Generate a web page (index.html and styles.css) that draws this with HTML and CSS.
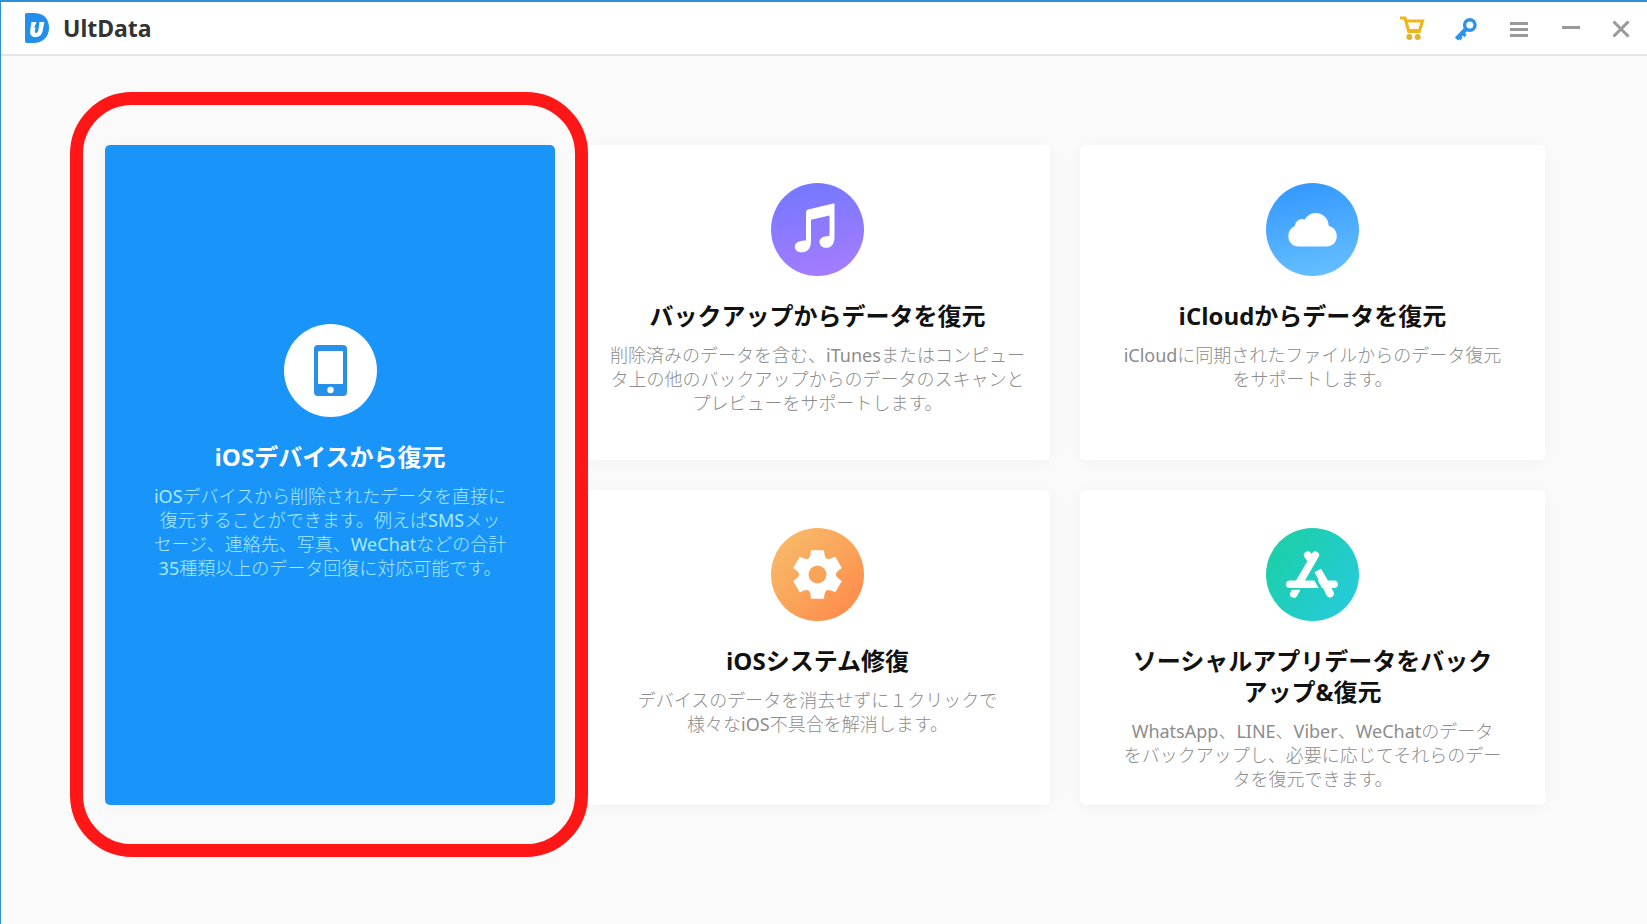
FILE: index.html
```html
<!DOCTYPE html>
<html lang="ja">
<head>
<meta charset="utf-8">
<meta name="viewport" content="width=device-width, initial-scale=1">
<title>UltData</title>
<link rel="stylesheet" href="styles.css">
</head>
<body>
<div class="window">
  <header class="titlebar">
    <svg class="logo" viewBox="0 0 24 30" aria-hidden="true">
      <path fill="#2290ea" d="M0 1.5Q0 0 1.500 0H8C19 0 24 6 24 14.500C24 24 18 30 8 30H2Q0 30 0 28Z"/>
      <path fill="#fff" d="M6.500 9H11.500L10 18.500Q10 20.500 11.600 20Q13 19.500 13.500 16L14.500 9H19.300L17.600 18Q16.200 24.200 10.300 24.200Q4.300 24 5.200 17.500Z"/>
      <path fill="#2290ea" d="M12.300 8L9 14.500H11L10.200 18L14 12.500H12Z"/>
    </svg>
    <h1 class="brand">UltData</h1>
    <nav class="actions" aria-label="ウィンドウ">
      <button class="action" type="button" aria-label="購入">
        <svg viewBox="0 0 32 32" fill="none" stroke="#efb71c" stroke-width="3.200">
          <path d="M3 6H8L11.500 18.500H22.500L25.500 9H9"/>
          <path d="M10.500 20H23.500" stroke-width="2"/>
          <g fill="#e3b22c" stroke="none"><circle cx="12.300" cy="25" r="3"/><circle cx="20.700" cy="25" r="3"/></g>
        </svg>
      </button>
      <button class="action" type="button" aria-label="登録">
        <svg viewBox="0 0 32 32" fill="none" stroke="#2b93ec">
          <circle cx="20.800" cy="13" r="5.200" stroke-width="3.400"/>
          <path d="M17 17L7.500 27" stroke-width="4.400"/>
          <path d="M13 20.500L16.500 24M9.500 24L12.500 27" stroke-width="3.200"/>
        </svg>
      </button>
      <button class="action" type="button" aria-label="メニュー">
        <svg viewBox="0 0 32 32" fill="none" stroke="#999" stroke-width="3"><path d="M9 11.500H27M9 17.500H27M9 23.500H27"/></svg>
      </button>
      <button class="action" type="button" aria-label="最小化">
        <svg viewBox="0 0 32 32" fill="none" stroke="#999" stroke-width="3"><path d="M9 15.500H27"/></svg>
      </button>
      <button class="action" type="button" aria-label="閉じる">
        <svg viewBox="0 0 32 32" fill="none" stroke="#999" stroke-width="3"><path d="M8.500 9.500L23.500 24.500M23.500 9.500L8.500 24.500"/></svg>
      </button>
    </nav>
  </header>

  <main class="modes">
    <a class="card card-primary" href="#device">
      <svg class="icon" viewBox="0 0 93 93" aria-hidden="true">
        <circle cx="46.500" cy="46.500" r="46.500" fill="#fff"/>
        <rect x="30" y="21" width="33" height="51" rx="4" fill="#2790ea"/>
        <rect x="34" y="27" width="25" height="33" rx="1" fill="#fff"/>
        <circle cx="46.500" cy="66" r="3.200" fill="#fff"/>
      </svg>
      <h2 class="card-title">iOSデバイスから復元</h2>
      <p class="card-text">iOSデバイスから削除されたデータを直接に<br>復元することができます。例えばSMSメッ<br>セージ、連絡先、写真、WeChatなどの合計<br>35種類以上のデータ回復に対応可能です。</p>
    </a>

    <a class="card" href="#backup">
      <svg class="icon" viewBox="0 0 93 93" aria-hidden="true">
        <defs><linearGradient id="violet" x1="0.400" y1="0" x2="0.600" y2="1"><stop offset="0" stop-color="#7478ff"/><stop offset="1" stop-color="#a67cff"/></linearGradient></defs>
        <circle cx="46.500" cy="46.500" r="46.500" fill="url(#violet)"/>
        <path fill="#fff" d="M35 29Q35 27 37 26.400L63.500 20.300V54C63.500 61.500 60 64.800 55.500 64.800C51.500 64.800 48.500 62.500 48.500 59C48.500 55 52.500 53 58.500 53V32.500L40 36.800V58C40 66 36 69.300 30.700 69.300C26.500 69.300 23.800 67 23.800 63.700C23.800 59.700 28 57.500 35 57.500Z"/>
      </svg>
      <h2 class="card-title">バックアップからデータを復元</h2>
      <p class="card-text">削除済みのデータを含む、iTunesまたはコンピュー<br>タ上の他のバックアップからのデータのスキャンと<br>プレビューをサポートします。</p>
    </a>

    <a class="card" href="#icloud">
      <svg class="icon" viewBox="0 0 93 93" aria-hidden="true">
        <defs><linearGradient id="sky" x1="0.400" y1="0" x2="0.600" y2="1"><stop offset="0" stop-color="#3498ff"/><stop offset="1" stop-color="#65bfff"/></linearGradient></defs>
        <circle cx="46.500" cy="46.500" r="46.500" fill="url(#sky)"/>
        <path fill="#fff" d="M32.500 63.500C26.500 63.500 22.300 59 22.300 53.500C22.300 48.500 25 44.500 28.800 43.300C29 38.500 34 34.500 39 36.500C41 32.500 45 30 49.800 30C57 30 62.500 35.500 62.800 43C67.500 44 70.800 48 70.800 53C70.800 59 66.500 63.500 60.500 63.500Z"/>
      </svg>
      <h2 class="card-title">iCloudからデータを復元</h2>
      <p class="card-text">iCloudに同期されたファイルからのデータ復元<br>をサポートします。</p>
    </a>

    <a class="card" href="#repair">
      <svg class="icon" viewBox="0 0 93 93" aria-hidden="true">
        <defs><linearGradient id="amber" x1="0.100" y1="0.100" x2="0.900" y2="0.900"><stop offset="0" stop-color="#f8b96a"/><stop offset="0.500" stop-color="#faa55a"/><stop offset="1" stop-color="#ff8a4b"/></linearGradient></defs>
        <circle cx="46.500" cy="46.500" r="46.500" fill="url(#amber)"/>
        <g transform="translate(46.500 46.500)" fill="#fff">
          <circle r="18"/>
          <path id="tooth" d="M-10 -15Q-7 -16 -6.500 -24.300H6.500Q7 -16 10 -15L10 15Q7 16 6.500 24.300H-6.500Q-7 16 -10 15Z"/>
          <use href="#tooth" transform="rotate(60)"/>
          <use href="#tooth" transform="rotate(120)"/>
          <circle r="9" fill="#faa45a"/>
        </g>
      </svg>
      <h2 class="card-title">iOSシステム修復</h2>
      <p class="card-text">デバイスのデータを消去せずに１クリックで<br>様々なiOS不具合を解消します。</p>
    </a>

    <a class="card" href="#social">
      <svg class="icon" viewBox="0 0 93 93" aria-hidden="true">
        <defs><linearGradient id="teal" x1="0.100" y1="0.200" x2="0.900" y2="0.800"><stop offset="0" stop-color="#1ccfa9"/><stop offset="1" stop-color="#25cbd8"/></linearGradient></defs>
        <circle cx="46.500" cy="46.500" r="46.500" fill="url(#teal)"/>
        <g fill="none" stroke="#fff" stroke-width="7.600" stroke-linecap="round">
          <path d="M31 60L27.800 66"/>
          <path stroke="#20cdb8" stroke-width="2" d="M24 60.800H38"/>
          <path d="M23.800 56.300H68"/>
          <path d="M41.800 27.200L45 32M49.300 27.200L33 55"/>
          <path stroke="#22cdc0" stroke-width="3" stroke-linecap="butt" d="M46.500 46L56.500 64"/>
          <path stroke-linecap="butt" d="M51.800 42.500L60 57"/>
          <path d="M56 50L64 65.500"/>
        </g>
      </svg>
      <h2 class="card-title">ソーシャルアプリデータをバック<br>アップ&amp;復元</h2>
      <p class="card-text">WhatsApp、LINE、Viber、WeChatのデータ<br>をバックアップし、必要に応じてそれらのデー<br>タを復元できます。</p>
    </a>
  </main>
</div>
</body>
</html>
```
FILE: styles.css
```css
* {
  box-sizing: border-box;
}

body {
  margin: 0;
  background: #fafafa;
  color: #111;
  font-family: "Open Sans", "Noto Sans CJK JP", sans-serif;
}

.window {
  min-height: 100vh;
  border-top: 2px solid #308fd8;
  border-left: 1px solid #308fd8;
}

.titlebar {
  display: flex;
  align-items: center;
  height: 54px;
  padding: 0 10px 0 24px;
  background: #fff;
  border-bottom: 2px solid #e6e6e6;
}

.logo {
  width: 24px;
  height: 30px;
}

.brand {
  margin: 0 0 0 14px;
  color: #333;
  font-family: "Noto Sans", sans-serif;
  font-size: 23px;
  font-weight: 700;
  line-height: 32px;
}

.actions {
  display: flex;
  gap: 20px;
  margin-left: auto;
}

.action {
  width: 32px;
  height: 32px;
  padding: 0;
  border: 0;
  background: none;
  cursor: pointer;
}

.action svg {
  display: block;
  width: 32px;
  height: 32px;
}

.modes {
  display: grid;
  grid-template-columns: 450fr 465fr 465fr;
  grid-auto-rows: minmax(315px, auto);
  gap: 30px;
  padding: 89px 102px 60px 104px;
}

.card {
  display: flex;
  flex-direction: column;
  align-items: center;
  padding: 38px 20px 12px;
  border-radius: 5px;
  background: #fff;
  box-shadow: 0 2px 14px rgba(0, 0, 0, 0.04);
  color: #111;
  text-align: center;
  text-decoration: none;
}

.icon {
  flex: none;
  width: 93px;
  height: 93px;
}

.card-title {
  margin: 24px 0 12px;
  font-size: 24px;
  font-weight: 700;
  line-height: 31px;
}

.card-text {
  margin: 0;
  color: #8c8c8c;
  font-family: "Noto Sans", "Noto Sans CJK JP Light", "Noto Sans CJK JP", sans-serif;
  font-size: 18px;
  font-weight: 400;
  line-height: 24px;
}

.card-primary {
  position: relative;
  grid-row: span 2;
  justify-content: center;
  padding-bottom: 85px;
  background: #1994f8;
  color: #fff;
}

.card-primary .card-text {
  color: #a8eaff;
}

/* Highlight ring around the selected mode */
.card-primary::after {
  content: "";
  position: absolute;
  inset: -53px -33px -52px -35px;
  z-index: 1;
  border: 13px solid #ff1616;
  border-radius: 62px;
  pointer-events: none;
}
```
